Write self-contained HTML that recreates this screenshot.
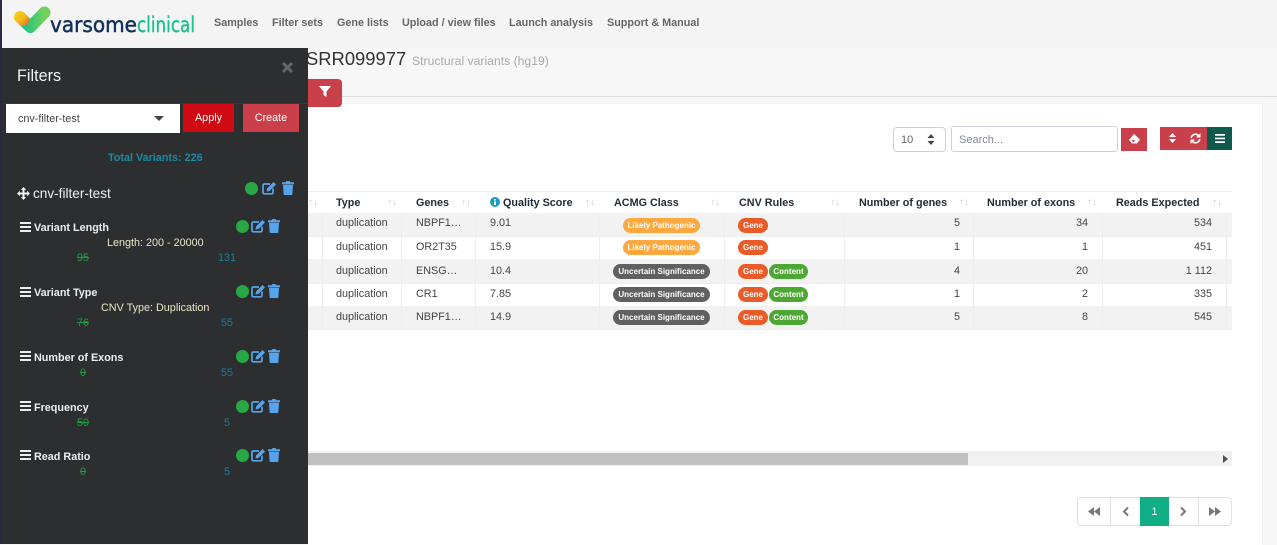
<!DOCTYPE html>
<html><head><meta charset="utf-8">
<style>
html,body{margin:0;padding:0;width:1277px;height:544px;overflow:hidden;background:#f7f7f7;font-family:"Liberation Sans",sans-serif;}
.a,.t{position:absolute}
.t{white-space:nowrap;line-height:14px;font-size:10.8px}
.n{font-weight:bold;color:#666;top:16px}
.h{font-weight:bold;color:#212b36;top:196px}
.d{color:#444}
.r{text-align:right;width:60px}
.s{color:#cfcfcf;font-size:10px;top:196px;letter-spacing:0}
.b{position:absolute;height:15px;border-radius:8px;color:#fff;font-weight:bold;font-size:8px;line-height:15px;text-align:center;white-space:nowrap}
.lp{left:623px;width:77px;background:#ffa83f}
.us{left:613px;width:97px;background:#606060}
.ge{left:738px;width:30px;background:#ea5b2a}
.co{left:769px;width:39px;background:#4da833}
.ti{font-weight:bold;color:#eee;left:34px}
.sub{color:#e9e4c8;}
.g{color:#1f9d45;text-decoration:line-through;width:30px;text-align:center}
.bl{color:#17809a;width:40px;text-align:center}
.c{position:absolute;width:13px;height:13px;border-radius:50%;background:#28a745}
.row{position:absolute;left:308px;width:924px;height:23px}
.v{position:absolute;width:1px;background:#eee}
svg{position:absolute;overflow:visible}
</style></head><body>
<svg width="0" height="0" style="position:absolute"><defs>
<symbol id="ed" viewBox="0 0 15 14"><path d="M11 7.500v4a1.300 1.300 0 0 1-1.300 1.300H2.300A1.300 1.300 0 0 1 1 11.500V4.300A1.300 1.300 0 0 1 2.300 3H8" fill="none" stroke="#56a5ec" stroke-width="1.700"/><path d="M5 7.500 11.500 1l2.500 2.500L7.500 10 4.500 10.500z" fill="#56a5ec"/></symbol>
<symbol id="tr" viewBox="0 0 12 14"><path d="M0 1.300h3.800L4.500 0h3l.7 1.300H12V3.200H0zM1 3.800h10l-.6 9.200a1 1 0 0 1-1 1H2.600a1 1 0 0 1-1-1z" fill="#56a5ec"/></symbol>
<symbol id="bars" viewBox="0 0 11 10"><path d="M0 0h11v2H0zM0 4h11v2H0zM0 8h11v2H0z" fill="#eee"/></symbol>
</defs></svg>

<!-- top nav -->
<div class="a" style="left:0;top:0;width:1277px;height:48px;background:#f4f4f4"></div>
<div class="a" style="left:0;top:96px;width:1277px;height:1px;background:#ddd"></div>
<div class="a" style="left:308px;top:103px;width:954px;height:441px;background:#fff;border-top:1px solid #f2f2f2"></div>
<div class="a" style="left:1262px;top:103px;width:1px;height:441px;background:#f0f0f0"></div>

<svg style="left:0;top:0" width="60" height="48">
<defs><linearGradient id="lg" x1="0" y1="0" x2="1" y2="0"><stop offset="0" stop-color="#20c488"/><stop offset="1" stop-color="#74d05a"/></linearGradient>
<linearGradient id="og" gradientUnits="userSpaceOnUse" x1="16" y1="13" x2="27" y2="24"><stop offset="0" stop-color="#f8cf14"/><stop offset=".6" stop-color="#f5b31a"/><stop offset="1" stop-color="#e8772a"/></linearGradient></defs>
<path d="M24 21 30.500 27 44.500 12.500" fill="none" stroke="url(#lg)" stroke-width="12" stroke-linecap="round" stroke-linejoin="round"/>
<path d="M20 17 23 20" fill="none" stroke="url(#og)" stroke-width="12" stroke-linecap="round"/>
</svg>
<svg style="left:0;top:0" width="210" height="48">
<text x="50" y="32" font-family="DejaVu Sans" font-size="21.500" fill="#12305a" stroke="#12305a" stroke-width=".5" textLength="87" lengthAdjust="spacingAndGlyphs">varsome</text>
<text x="137" y="32" font-family="DejaVu Sans" font-size="21.500" fill="#1cc08f" stroke="#1cc08f" stroke-width=".4" textLength="58" lengthAdjust="spacingAndGlyphs">clinical</text>
</svg>

<span class="t n" style="left:214px">Samples</span>
<span class="t n" style="left:272px">Filter sets</span>
<span class="t n" style="left:337px">Gene lists</span>
<span class="t n" style="left:402px">Upload / view files</span>
<span class="t n" style="left:509px">Launch analysis</span>
<span class="t n" style="left:607px">Support &amp; Manual</span>

<!-- title -->
<span class="t" style="left:306px;top:49px;font-size:18.400px;line-height:20px;color:#333">SRR099977</span>
<span class="t" style="left:412px;top:54px;font-size:12.200px;color:#aaa">Structural variants (hg19)</span>
<div class="a" style="left:300px;top:79px;width:42px;height:28px;background:#c9404a;border-radius:0 4px 4px 0"></div>
<svg style="left:319px;top:86px" width="12" height="12" viewBox="0 0 12 12"><path d="M0 0h12L7.500 5.500V11L4.500 9V5.500z" fill="#fff"/></svg>

<!-- toolbar -->
<div class="a" style="left:893px;top:127px;width:51px;height:23px;border:1px solid #ccd2da;border-radius:4px;background:#fff"></div>
<span class="t" style="left:901px;top:133px;font-size:11px;color:#666">10</span>
<svg style="left:927px;top:134px" width="8" height="11" viewBox="0 0 8 11"><path d="M4 0 7.500 4H.5zM4 11 .5 7h7z" fill="#444"/></svg>
<div class="a" style="left:951px;top:126px;width:165px;height:24px;border:1px solid #ccd2da;border-radius:3px;background:#fff"></div>
<span class="t" style="left:959px;top:133px;font-size:11px;color:#808890">Search...</span>
<div class="a" style="left:1121px;top:128px;width:26px;height:23px;background:#c9404a"></div>
<svg style="left:1129px;top:134px" width="11" height="10" viewBox="0 0 11 10"><path d="M5 0 11 5.500 8 9.500H3L0 6z" fill="#fff"/><path d="M2.500 6h3.500L4.800 8H4z" fill="#c9404a"/></svg>
<div class="a" style="left:1160px;top:127px;width:47px;height:23px;background:#c9404a"></div>
<div class="a" style="left:1207px;top:127px;width:25px;height:23px;background:#0f5a4c"></div>
<svg style="left:1169px;top:133px" width="7" height="10" viewBox="0 0 7 10"><path d="M3.500 0 7 4H0zM3.500 10 0 6h7z" fill="#fff"/></svg>
<svg style="left:1190px;top:133px" width="11" height="11" viewBox="0 0 11 11"><path d="M1.200 5A4.300 4.300 0 0 1 8.500 2.500M9.800 6A4.300 4.300 0 0 1 2.500 8.500" fill="none" stroke="#fff" stroke-width="1.600"/><path d="M10.500 0v4.500H6zM.5 11V6.500H5z" fill="#fff"/></svg>
<svg style="left:1215px;top:134px" width="10" height="9" viewBox="0 0 10 9"><path d="M0 0h10v1.700H0zM0 3.600h10v1.700H0zM0 7.300h10V9H0z" fill="#fff"/></svg>

<!-- table -->
<div class="a" style="left:308px;top:191px;width:924px;height:1px;background:#eee"></div>
<div class="row" style="top:213px;background:#f2f2f2"></div>
<div class="row" style="top:259px;background:#f2f2f2;height:24px"></div>
<div class="row" style="top:306px;background:#f2f2f2"></div>
<div class="a" style="left:308px;top:236px;width:924px;height:1px;background:#eee"></div>
<div class="a" style="left:308px;top:283px;width:924px;height:1px;background:#eee"></div>
<div class="a" style="left:308px;top:329px;width:924px;height:1px;background:#eee"></div>
<div class="v" style="left:322px;top:213px;height:116px"></div>
<div class="v" style="left:401px;top:213px;height:116px"></div>
<div class="v" style="left:475px;top:213px;height:116px"></div>
<div class="v" style="left:599px;top:213px;height:116px"></div>
<div class="v" style="left:724px;top:213px;height:116px"></div>
<div class="v" style="left:844px;top:213px;height:116px"></div>
<div class="v" style="left:973px;top:213px;height:116px"></div>
<div class="v" style="left:1102px;top:213px;height:116px"></div>
<div class="v" style="left:1226px;top:213px;height:116px"></div>

<span class="t h" style="left:336px">Type</span>
<span class="t h" style="left:416px">Genes</span>
<svg style="left:490px;top:197px" width="10" height="10" viewBox="0 0 10 10"><circle cx="5" cy="5" r="5" fill="#1b9dc0"/><path d="M4 2h2v1.500H4zM4 4.500h2V8H4z" fill="#fff"/></svg>
<span class="t h" style="left:503px">Quality Score</span>
<span class="t h" style="left:614px">ACMG Class</span>
<span class="t h" style="left:739px">CNV Rules</span>
<span class="t h" style="left:859px">Number of genes</span>
<span class="t h" style="left:987px">Number of exons</span>
<span class="t h" style="left:1116px">Reads Expected</span>

<span class="t s" style="left:308px">↑↓</span>
<span class="t s" style="left:387px">↑↓</span>
<span class="t s" style="left:461px">↑↓</span>
<span class="t s" style="left:585px">↑↓</span>
<span class="t s" style="left:710px">↑↓</span>
<span class="t s" style="left:830px">↑↓</span>
<span class="t s" style="left:959px">↑↓</span>
<span class="t s" style="left:1087px">↑↓</span>
<span class="t s" style="left:1212px">↑↓</span>

<span class="t d" style="left:336px;top:216px">duplication</span><span class="t d" style="left:416px;top:216px">NBPF1…</span><span class="t d" style="left:490px;top:216px">9.01</span>
<span class="t d" style="left:336px;top:240px">duplication</span><span class="t d" style="left:416px;top:240px">OR2T35</span><span class="t d" style="left:490px;top:240px">15.9</span>
<span class="t d" style="left:336px;top:264px">duplication</span><span class="t d" style="left:416px;top:264px">ENSG…</span><span class="t d" style="left:490px;top:264px">10.4</span>
<span class="t d" style="left:336px;top:287px">duplication</span><span class="t d" style="left:416px;top:287px">CR1</span><span class="t d" style="left:490px;top:287px">7.85</span>
<span class="t d" style="left:336px;top:310px">duplication</span><span class="t d" style="left:416px;top:310px">NBPF1…</span><span class="t d" style="left:490px;top:310px">14.9</span>

<span class="b lp" style="top:218px">Likely Pathogenic</span><span class="b ge" style="top:218px">Gene</span>
<span class="b lp" style="top:240px">Likely Pathogenic</span><span class="b ge" style="top:240px">Gene</span>
<span class="b us" style="top:264px">Uncertain Significance</span><span class="b ge" style="top:264px">Gene</span><span class="b co" style="top:264px">Content</span>
<span class="b us" style="top:287px">Uncertain Significance</span><span class="b ge" style="top:287px">Gene</span><span class="b co" style="top:287px">Content</span>
<span class="b us" style="top:310px">Uncertain Significance</span><span class="b ge" style="top:310px">Gene</span><span class="b co" style="top:310px">Content</span>

<span class="t d r" style="left:900px;top:216px">5</span><span class="t d r" style="left:1028px;top:216px">34</span><span class="t d r" style="left:1152px;top:216px">534</span>
<span class="t d r" style="left:900px;top:240px">1</span><span class="t d r" style="left:1028px;top:240px">1</span><span class="t d r" style="left:1152px;top:240px">451</span>
<span class="t d r" style="left:900px;top:264px">4</span><span class="t d r" style="left:1028px;top:264px">20</span><span class="t d r" style="left:1152px;top:264px">1 112</span>
<span class="t d r" style="left:900px;top:287px">1</span><span class="t d r" style="left:1028px;top:287px">2</span><span class="t d r" style="left:1152px;top:287px">335</span>
<span class="t d r" style="left:900px;top:310px">5</span><span class="t d r" style="left:1028px;top:310px">8</span><span class="t d r" style="left:1152px;top:310px">545</span>

<!-- scrollbar -->
<div class="a" style="left:308px;top:451px;width:924px;height:15px;background:#f1f1f1"></div>
<div class="a" style="left:308px;top:453px;width:660px;height:12px;background:#c1c1c1"></div>
<svg style="left:1223px;top:455px" width="5" height="8" viewBox="0 0 5 8"><path d="M0 0 5 4 0 8z" fill="#505050"/></svg>

<!-- pagination -->
<div class="a" style="left:1077px;top:497px;width:153px;height:27px;border:1px solid #dee2e6;border-radius:4px;background:#fff"></div>
<div class="a" style="left:1110px;top:497px;width:1px;height:29px;background:#dee2e6"></div>
<div class="a" style="left:1198px;top:497px;width:1px;height:29px;background:#dee2e6"></div>
<div class="a" style="left:1140px;top:497px;width:29px;height:29px;background:#0fae84"></div>
<span class="t" style="left:1140px;top:505px;width:29px;text-align:center;color:#fff">1</span>
<svg style="left:1088px;top:507px" width="12" height="9" viewBox="0 0 12 9"><path d="M6 0v9L0 4.500zM12 0v9L6 4.500z" fill="#777"/></svg>
<svg style="left:1122px;top:507px" width="7" height="9" viewBox="0 0 7 9"><path d="M6 .5 2 4.500l4 4" fill="none" stroke="#777" stroke-width="2"/></svg>
<svg style="left:1180px;top:507px" width="7" height="9" viewBox="0 0 7 9"><path d="M1 .5l4 4-4 4" fill="none" stroke="#777" stroke-width="2"/></svg>
<svg style="left:1209px;top:507px" width="12" height="9" viewBox="0 0 12 9"><path d="M0 0v9l6-4.500zM6 0v9l6-4.500z" fill="#777"/></svg>

<!-- sidebar -->
<div class="a" style="left:0;top:0;width:2px;height:544px;background:#2b2745"></div>
<div class="a" style="left:2px;top:48px;width:306px;height:496px;background:#2d2e30"></div>
<div class="a" style="left:2px;top:103px;width:306px;height:1px;background:#36383a"></div>
<span class="t" style="left:17px;top:67px;font-size:16.200px;line-height:18px;color:#f4f4f4">Filters</span>
<svg style="left:282px;top:62px" width="11" height="11" viewBox="0 0 11 11"><path d="M1 1l9 9M10 1 1 10" stroke="#666" stroke-width="3"/></svg>
<div class="a" style="left:6px;top:104px;width:174px;height:29px;background:#fff"></div>
<span class="t" style="left:18px;top:112px;color:#444">cnv-filter-test</span>
<svg style="left:154px;top:116px" width="10" height="5" viewBox="0 0 10 5"><path d="M0 0h10L5 5z" fill="#444"/></svg>
<div class="a" style="left:183px;top:104px;width:51px;height:28px;background:#cf0a12"></div>
<span class="t" style="left:183px;top:111px;width:51px;text-align:center;color:#fff">Apply</span>
<div class="a" style="left:243px;top:104px;width:56px;height:28px;background:#c9404a"></div>
<span class="t" style="left:243px;top:111px;width:56px;text-align:center;color:#fff">Create</span>
<span class="t" style="left:108px;top:151px;font-weight:bold;color:#1c8aa5">Total Variants: 226</span>

<svg style="left:17px;top:187px" width="13" height="13" viewBox="0 0 13 13"><path d="M6.500 0 9.200 2.900H7.500V5.500H10.100V3.800L13 6.500 10.100 9.200V7.500H7.500V10.100H9.200L6.500 13 3.800 10.100H5.500V7.500H2.900V9.200L0 6.500 2.900 3.800V5.500H5.500V2.900H3.800z" fill="#f2f2f2"/></svg>
<span class="t" style="left:33px;top:187px;font-size:13.600px;color:#eee">cnv-filter-test</span>
<div class="c" style="left:245px;top:182px"></div>
<svg style="left:262px;top:181px" width="15" height="14"><use href="#ed"/></svg>
<svg style="left:282px;top:181px" width="12" height="14"><use href="#tr"/></svg>

<!-- items -->
<svg style="left:20px;top:222px" width="11" height="10"><use href="#bars"/></svg>
<span class="t ti" style="top:221px">Variant Length</span>
<div class="c" style="left:236px;top:220px"></div>
<svg style="left:251px;top:219px" width="15" height="14"><use href="#ed"/></svg>
<svg style="left:268px;top:219px" width="12" height="14"><use href="#tr"/></svg>
<span class="t sub" style="left:107px;top:236px">Length: 200 - 20000</span>
<span class="t g" style="left:68px;top:251px">95</span><span class="t bl" style="left:207px;top:251px">131</span>

<svg style="left:20px;top:287px" width="11" height="10"><use href="#bars"/></svg>
<span class="t ti" style="top:286px">Variant Type</span>
<div class="c" style="left:236px;top:285px"></div>
<svg style="left:251px;top:284px" width="15" height="14"><use href="#ed"/></svg>
<svg style="left:268px;top:284px" width="12" height="14"><use href="#tr"/></svg>
<span class="t sub" style="left:101px;top:301px">CNV Type: Duplication</span>
<span class="t g" style="left:68px;top:316px">76</span><span class="t bl" style="left:207px;top:316px">55</span>

<svg style="left:20px;top:351px" width="11" height="10"><use href="#bars"/></svg>
<span class="t ti" style="top:351px">Number of Exons</span>
<div class="c" style="left:236px;top:350px"></div>
<svg style="left:251px;top:349px" width="15" height="14"><use href="#ed"/></svg>
<svg style="left:268px;top:349px" width="12" height="14"><use href="#tr"/></svg>
<span class="t g" style="left:68px;top:366px">0</span><span class="t bl" style="left:207px;top:366px">55</span>

<svg style="left:20px;top:401px" width="11" height="10"><use href="#bars"/></svg>
<span class="t ti" style="top:401px">Frequency</span>
<div class="c" style="left:236px;top:400px"></div>
<svg style="left:251px;top:399px" width="15" height="14"><use href="#ed"/></svg>
<svg style="left:268px;top:399px" width="12" height="14"><use href="#tr"/></svg>
<span class="t g" style="left:68px;top:416px">50</span><span class="t bl" style="left:207px;top:416px">5</span>

<svg style="left:20px;top:450px" width="11" height="10"><use href="#bars"/></svg>
<span class="t ti" style="top:450px">Read Ratio</span>
<div class="c" style="left:236px;top:449px"></div>
<svg style="left:251px;top:448px" width="15" height="14"><use href="#ed"/></svg>
<svg style="left:268px;top:448px" width="12" height="14"><use href="#tr"/></svg>
<span class="t g" style="left:68px;top:465px">0</span><span class="t bl" style="left:207px;top:465px">5</span>
</body></html>
